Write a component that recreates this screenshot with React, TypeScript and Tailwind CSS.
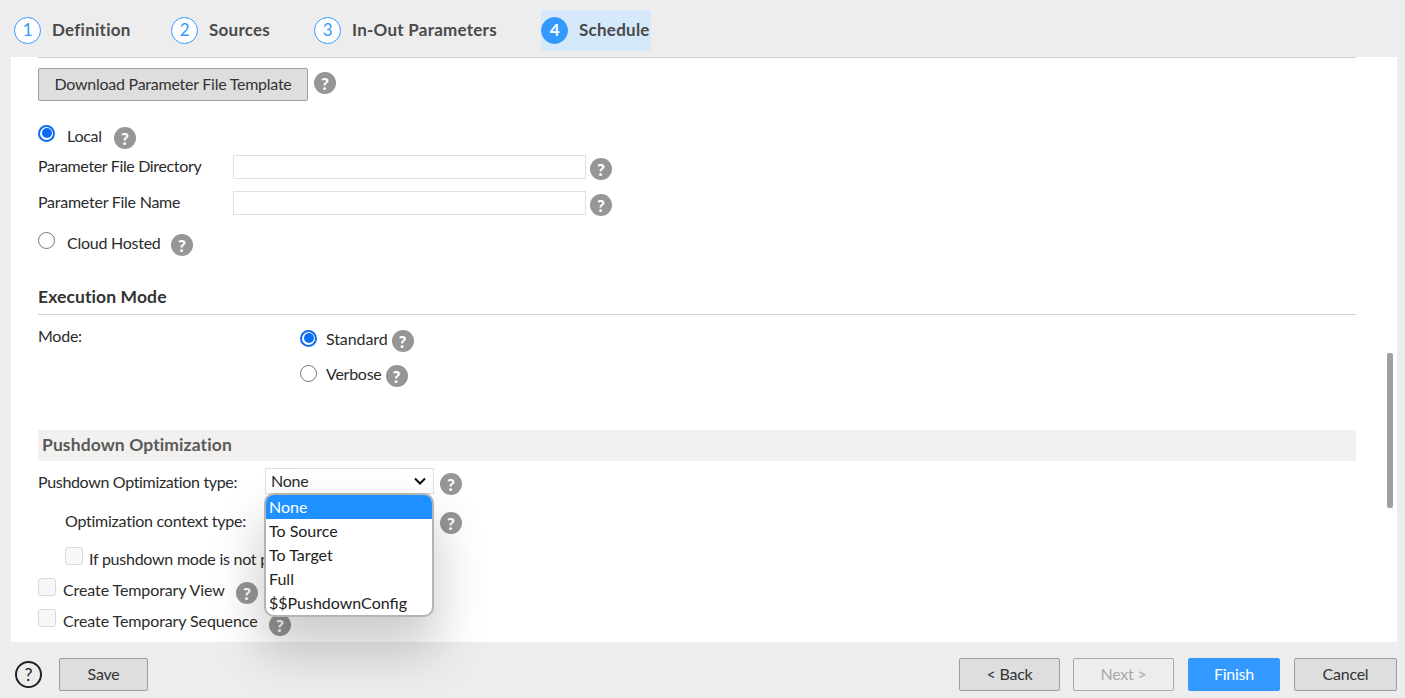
const font = "font-['Lato','Liberation_Sans',sans-serif]"

function Help({ className = "mt-[4px]" }: { className?: string }) {
  return (
    <span className={`inline-flex size-[22px] shrink-0 items-center justify-center rounded-full bg-[#969696] text-[17px] font-black leading-none tracking-normal text-white ${className}`}>
      ?
    </span>
  )
}

function Radio({ checked = false, className = "" }: { checked?: boolean; className?: string }) {
  return (
    <span className={`flex size-[17px] shrink-0 items-center justify-center rounded-full bg-white ${checked ? "border-2 border-[#0b6cf0]" : "border border-[#767676]"} ${className}`}>
      {checked && <span className="size-[10px] rounded-full bg-[#0b6cf0]" />}
    </span>
  )
}

function Check() {
  return <span className="mb-[6px] block size-[18px] shrink-0 rounded-[3px] border border-[#d9d9d9] bg-[#f7f7f7]" />
}

function Step({ n, label, width, active = false }: { n: number; label: string; width: string; active?: boolean }) {
  return (
    <div className={`flex h-[41px] items-center gap-[11px] pb-[1px] ${width} ${active ? "bg-[#d5e9fb]" : ""}`}>
      <span className={`flex size-[27px] shrink-0 items-center justify-center rounded-full border border-[#3399ff] text-[17px] ${active ? "bg-[#3399ff] font-bold text-white" : "bg-white text-[#3399ff]"}`}>
        {n}
      </span>
      <span className="text-[17px] font-bold tracking-[0.25px] whitespace-nowrap text-[#4a4a4a]">{label}</span>
    </div>
  )
}

function Button({ children, className = "" }: { children: React.ReactNode; className?: string }) {
  return (
    <button className={`flex h-[33px] items-center justify-center rounded-[2px] border pb-[2px] text-[16px] ${className}`}>
      {children}
    </button>
  )
}

const options = ["None", "To Source", "To Target", "Full", "$$PushdownConfig"]
const grey = "bg-[#dedede] border-[#9d9d9d] text-[#333]"

export default function App() {
  return (
    <div className={`flex h-[698px] w-[1405px] flex-col overflow-hidden bg-[#ededed] text-[16px] tracking-[-0.25px] text-[#2b2b2b] ${font}`}>
      <div className="flex h-[57px] shrink-0 items-start pt-[10px] pl-[14px]">
        <Step n={1} label="Definition" width="w-[157px]" />
        <Step n={2} label="Sources" width="w-[143px]" />
        <Step n={3} label="In-Out Parameters" width="w-[227px]" />
        <Step n={4} label="Schedule" width="w-[110px]" active />
      </div>

      <div className="relative ml-[11px] h-[585px] w-[1386px] shrink-0 bg-white pr-[41px] pl-[27px]">
        <div className="h-px bg-[#cfcfcf]" />
        <div className="mt-[10px] flex items-center gap-[6px]">
          <Button className={`w-[270px] ${grey}`}>Download Parameter File Template</Button>
          <Help className="mb-[3px]" />
        </div>

        <div className="mt-[24px] flex h-[22px] items-center">
          <Radio checked className="mb-[6px]" />
          <span className="ml-[12px] w-[47px]">Local</span>
          <Help />
        </div>
        <div className="mt-[8px] flex h-[24px] items-center">
          <span className="mb-[2px] w-[195px] tracking-[-0.35px]">Parameter File Directory</span>
          <span className="h-[24px] w-[353px] border border-[#e0e0e0] bg-white" />
          <Help className="mt-[4px] ml-[4px]" />
        </div>
        <div className="mt-[12px] flex h-[24px] items-center">
          <span className="mb-[2px] w-[195px]">Parameter File Name</span>
          <span className="h-[24px] w-[353px] border border-[#e0e0e0] bg-white" />
          <Help className="mt-[4px] ml-[4px]" />
        </div>
        <div className="mt-[17px] flex h-[22px] items-center">
          <Radio className="mb-[6px]" />
          <span className="ml-[12px] w-[104px]">Cloud Hosted</span>
          <Help />
        </div>

        <div className="mt-[31px] border-b border-[#cfcfcf] pb-[5px] text-[17.5px] leading-[24px] font-bold tracking-[0.1px] text-[#333]">Execution Mode</div>
        <div className="flex">
          <span className="mt-[9px] w-[262px]">Mode:</span>
          <div className="flex flex-col">
            <div className="mt-[12px] flex h-[24px] items-center">
              <Radio checked className="mb-[2px]" />
              <span className="mr-[4px] ml-[9px] tracking-[-0.1px]">Standard</span>
              <Help />
            </div>
            <div className="mt-[11px] flex h-[24px] items-center">
              <Radio className="mb-[2px]" />
              <span className="mr-[4px] ml-[9px]">Verbose</span>
              <Help />
            </div>
          </div>
        </div>

        <div className="mt-[44px] flex h-[31px] items-center bg-[#f2f1ef] pl-[4px] text-[17.5px] font-bold tracking-[0.1px] text-[#5a5a5a]">Pushdown Optimization</div>

        <div className="mt-[7px] flex h-[28px] items-center">
          <span className="w-[227px] tracking-[-0.33px]">Pushdown Optimization type:</span>
          <div className="flex h-[26px] w-[169px] items-center justify-between self-start border border-[#e0e0e0] pr-[6px] pl-[5px]">
            <span>None</span>
            <svg width="14" height="14" viewBox="0 0 14 14" fill="none" stroke="#111" strokeWidth="2">
              <path d="M2 4.5 7 9.5 12 4.5" />
            </svg>
          </div>
          <Help className="mt-[4px] ml-[6px]" />
        </div>
        <div className="mt-[13px] flex h-[24px] items-center pl-[27px]">
          <span className="w-[369px]">Optimization context type:</span>
          <Help className="mt-[4px] ml-[6px]" />
        </div>
        <div className="mt-[14px] flex h-[24px] items-center gap-[6px] pl-[27px]">
          <Check />
          <span className="whitespace-nowrap">If pushdown mode is not p</span>
        </div>
        <div className="mt-[7px] flex h-[24px] items-center">
          <Check />
          <span className="ml-[7px] w-[172px] tracking-[-0.1px]">Create Temporary View</span>
          <Help className="mt-[6px] ml-[1px]" />
        </div>
        <div className="mt-[7px] flex h-[24px] items-center">
          <Check />
          <span className="ml-[7px] w-[205px] tracking-[-0.1px]">Create Temporary Sequence</span>
          <Help className="mt-[8px] ml-[1px]" />
        </div>

        <div className="absolute top-[436px] left-[253px] w-[170px] overflow-hidden rounded-[10px] border-2 border-[#b4b4b4] bg-white tracking-[0px] shadow-[0_30px_50px_4px_rgba(0,0,0,0.2)]">
          {options.map((o, i) => (
            <div key={o} className={`flex h-[24px] items-center pl-[3px] ${i === 0 ? "bg-[#1e90ff] text-white" : "text-[#222]"}`}>
              {o}
            </div>
          ))}
        </div>

        <div className="absolute top-[296px] right-[4px] h-[155px] w-[6px] rounded-[2px] bg-[#a0a0a0]" />
      </div>

      <div className="flex flex-1 items-start pt-[16px] pr-[8px] pl-[15px]">
        <span className="mt-[3px] flex size-[27px] items-center justify-center rounded-full border-2 border-[#222] text-[18px] text-[#222]">?</span>
        <Button className={`ml-[17px] w-[89px] ${grey}`}>Save</Button>
        <Button className={`ml-auto w-[101px] ${grey}`}>&lt; Back</Button>
        <Button className="ml-[13px] w-[101px] border-[#a8a8a8] bg-[#ededed] text-[#a8a8a8]">Next &gt;</Button>
        <Button className="ml-[14px] w-[92px] border-[#3399ff] bg-[#3399ff] text-white">Finish</Button>
        <Button className={`ml-[14px] w-[103px] ${grey}`}>Cancel</Button>
      </div>
    </div>
  )
}
